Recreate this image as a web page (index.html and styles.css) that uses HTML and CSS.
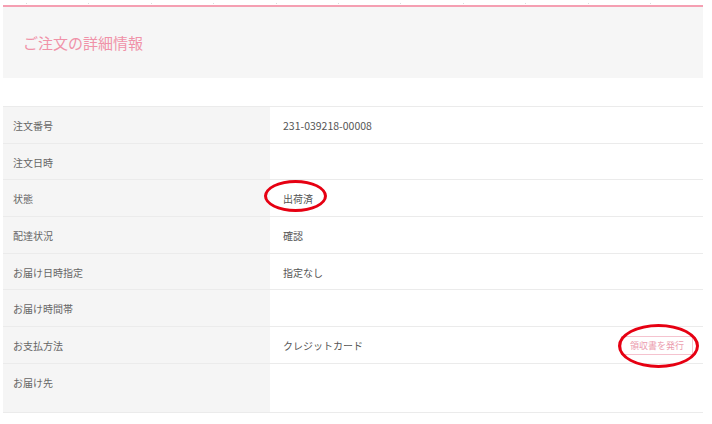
FILE: index.html
```html
<!doctype html>
<html lang='ja'>
  <head>
    <title>ご注文の詳細情報</title>
    <meta charset='UTF-8'>
    <meta name='viewport' content='width=device-width, initial-scale=1'>
    <link rel="stylesheet" href="styles.css">
  </head>
  <body>
<div class=page>
  <div class=ticks>
    <span></span><span></span><span></span><span></span><span></span><span></span>
    <span></span><span></span><span></span><span></span><span></span>
  </div>
  <header class=head>
    <h1>ご注文の詳細情報</h1>
  </header>
  <table class=detail>
    <tr><th>注文番号</th><td class=num>231-039218-00008</td></tr>
    <tr><th>注文日時</th><td></td></tr>
    <tr><th>状態</th><td><span class="mark status">出荷済</span></td></tr>
    <tr><th>配達状況</th><td>確認</td></tr>
    <tr><th>お届け日時指定</th><td>指定なし</td></tr>
    <tr><th>お届け時間帯</th><td></td></tr>
    <tr>
      <th>お支払方法</th>
      <td>
        <div class=pay>
          <span>クレジットカード</span>
          <button class="mark receipt">領収書を発行</button>
        </div>
      </td>
    </tr>
    <tr class=last><th>お届け先</th><td></td></tr>
  </table>
</div>
  </body>
</html>
```

FILE: styles.css
```css
html, body {
  margin: 0;
  font-family: "Noto Sans CJK JP", "Noto Sans", sans-serif;
  font-size: 10px;
  color: #666;
  background: #fff;
}
.page {
  width: 700px;
  margin-left: 3px;
}
.ticks {
  height: 5px;
  display: flex;
  gap: 61.4px;
  padding-left: 23px;
}
.ticks span {
  width: 1px;
  height: 1px;
  margin-top: 3px;
  background: #dcdcdc;
}
.head {
  height: 71px;
  border-top: 2px solid #f59fb2;
  background: #f6f6f6;
  display: flex;
  align-items: center;
  padding-left: 20px;
}
.head h1 {
  margin: 0;
  font-size: 15px;
  font-weight: normal;
  color: #f092a8;
}
.detail {
  margin-top: 28px;
  width: 700px;
  border-collapse: collapse;
  border-top: 1px solid #ebebeb;
  border-bottom: 1px solid #ebebeb;
}
.detail tr {
  border-top: 1px solid #ebebeb;
}
.detail th, .detail td {
  padding: 12px 0 10.7px;
  line-height: 13px;
  text-align: left;
  font-weight: normal;
  vertical-align: top;
}
.detail th {
  width: 257px;
  padding-left: 10px;
  background: #f5f5f5;
  color: #666;
}
.detail td {
  padding-left: 13px;
  padding-right: 10px;
  color: #555;
}
.detail td.num {
  font-size: 10.5px;
}
.detail tr.last th, .detail tr.last td {
  padding-bottom: 23px;
}
.pay {
  display: flex;
  justify-content: space-between;
  align-items: center;
}
.receipt {
  margin: -3px 0;
  padding: 2px 8px;
  border: 1px solid #f5c3cf;
  background: #fff;
  color: #eb9cae;
  font-family: inherit;
  font-size: 9px;
  line-height: 13px;
}
.mark {
  position: relative;
}
.mark::after {
  content: '';
  position: absolute;
  border: 3px solid #e60012;
  border-radius: 50%;
  box-sizing: border-box;
}
.status::after {
  left: -19px;
  top: -11px;
  width: 63px;
  height: 32px;
}
.receipt::after {
  left: -4px;
  top: -13px;
  width: 81px;
  height: 44px;
}
```
